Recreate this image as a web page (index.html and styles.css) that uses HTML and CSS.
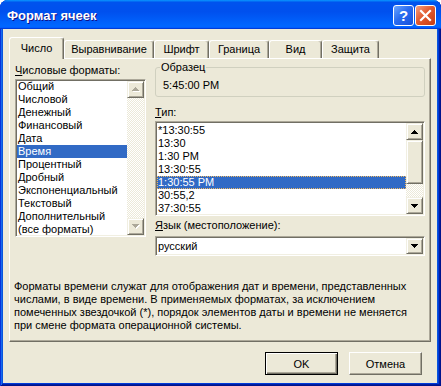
FILE: index.html
```html
<!DOCTYPE html>
<html lang="ru">
<head>
  <meta charset="UTF-8">
  <meta name="viewport" content="width=device-width, initial-scale=1.0">
  <title>Формат ячеек</title>
  <link rel="stylesheet" href="styles.css">
</head>
<body>
  <div class="window">
    <div class="titlebar">
      <span class="title">Формат ячеек</span>
      <div class="caption-buttons">
        <button class="cap-btn help">?</button>
        <button class="cap-btn close">
          <svg width="19" height="19" viewBox="0 0 19 19">
            <path d="M5 5L14 14M14 5L5 14" stroke="#fff" stroke-width="2.2" stroke-linecap="square"/>
          </svg>
        </button>
      </div>
    </div>

    <div class="client">
      <div class="tabs">
        <div class="tab tab-number active">Число</div>
        <div class="tab tab-align">Выравнивание</div>
        <div class="tab tab-font">Шрифт</div>
        <div class="tab tab-border">Граница</div>
        <div class="tab tab-view">Вид</div>
        <div class="tab tab-protect">Защита</div>
      </div>

      <div class="panel">
        <div class="columns">
          <div class="col-left">
            <label class="label"><u>Ч</u>исловые форматы:</label>
            <div class="listbox formats">
              <ul class="items">
                <li>Общий</li>
                <li>Числовой</li>
                <li>Денежный</li>
                <li>Финансовый</li>
                <li>Дата</li>
                <li class="selected">Время</li>
                <li>Процентный</li>
                <li>Дробный</li>
                <li>Экспоненциальный</li>
                <li>Текстовый</li>
                <li>Дополнительный</li>
                <li>(все форматы)</li>
              </ul>
              <div class="scrollbar disabled">
                <div class="sb-btn raised">
                  <svg width="8" height="5" viewBox="0 0 8 5"><path class="shade" d="M4 1h1v1h1v1h1v1h1v1H1V4h1V3h1V2h1z"/><path class="arrow" d="M3 0h1v1h1v1h1v1h1v1H0V3h1V2h1V1h1z"/></svg>
                </div>
                <div class="sb-track"></div>
                <div class="sb-btn raised">
                  <svg width="8" height="5" viewBox="0 0 8 5"><path class="shade" d="M1 1h7v1H7v1H6v1H5v1H4V4H3V3H2V2H1z"/><path class="arrow" d="M0 0h7v1H6v1H5v1H4v1H3V3H2V2H1V1H0z"/></svg>
                </div>
              </div>
            </div>
          </div>

          <div class="col-right">
            <fieldset class="group">
              <legend>Образец</legend>
              <div class="sample">5:45:00 PM</div>
            </fieldset>

            <label class="label type-label"><u>Т</u>ип:</label>
            <div class="listbox types">
              <ul class="items">
                <li>*13:30:55</li>
                <li>13:30</li>
                <li>1:30 PM</li>
                <li>13:30:55</li>
                <li class="selected focused">1:30:55 PM</li>
                <li>30:55,2</li>
                <li>37:30:55</li>
              </ul>
              <div class="scrollbar">
                <div class="sb-btn raised">
                  <svg width="7" height="4" viewBox="0 0 7 4"><path class="arrow" d="M3 0h1v1h1v1h1v1h1v1H0V3h1V2h1V1h1z"/></svg>
                </div>
                <div class="sb-thumb raised"></div>
                <div class="sb-track"></div>
                <div class="sb-btn raised">
                  <svg width="7" height="4" viewBox="0 0 7 4"><path class="arrow" d="M0 0h7v1H6v1H5v1H4v1H3V3H2V2H1V1H0z"/></svg>
                </div>
              </div>
            </div>

            <label class="label lang-label"><u>Я</u>зык (местоположение):</label>
            <div class="combo">
              <span class="combo-value">русский</span>
              <div class="sb-btn raised combo-btn">
                <svg width="7" height="4" viewBox="0 0 7 4"><path class="arrow" d="M0 0h7v1H6v1H5v1H4v1H3V3H2V2H1V1H0z"/></svg>
              </div>
            </div>
          </div>
        </div>

        <p class="desc">Форматы времени служат для отображения дат и времени, представленных<br>числами, в виде времени. В применяемых форматах, за исключением<br>помеченных звездочкой (*), порядок элементов даты и времени не меняется<br>при смене формата операционной системы.</p>
      </div>

      <div class="buttons">
        <button class="btn default">OK</button>
        <button class="btn">Отмена</button>
      </div>
    </div>
  </div>
</body>
</html>
```

FILE: styles.css
```css
/* Window frame */
* {
  box-sizing: border-box;
}

body {
  margin: 0;
  background: #fff;
  font-family: "Liberation Sans", Arial, sans-serif;
  font-size: 11px;
  color: #000;
}

.window {
  width: 441px;
  height: 386px;
  display: flex;
  flex-direction: column;
  border-radius: 8px 8px 0 0;
  overflow: hidden;
  background: #0855dd;
  box-shadow: inset 1px 0 #0831d9, inset -1px -1px #00138c,
    inset 2px 0 #166aee, inset -2px -2px #001ea0,
    inset -3px -3px #003bda;
}

.titlebar {
  flex: none;
  height: 29px;
  display: flex;
  align-items: center;
  justify-content: space-between;
  padding: 2px 5px 0 7px;
  background: linear-gradient(180deg, #0997ff, #0053ee 8%, #0050ee 40%, #06f 88%, #06f 93%, #005bff 95%, #003dd7 96%, #003dd7);
}

.title {
  color: #fff;
  font-weight: bold;
  font-size: 13px;
  text-shadow: 1px 1px #0f1089;
}

.caption-buttons {
  display: flex;
  gap: 1px;
}

.cap-btn {
  width: 21px;
  height: 21px;
  padding: 0;
  border: 1px solid #fff;
  border-radius: 3px;
  display: flex;
  align-items: center;
  justify-content: center;
}

.help {
  background: linear-gradient(135deg, #6aa6ff, #2a6cf0 45%, #1450dc);
  color: #fff;
  font: bold 15px "Liberation Sans", Arial, sans-serif;
}

.close {
  background: linear-gradient(135deg, #f4a080, #e25a30 45%, #c63c12);
}

.client {
  flex: 1;
  margin: 0 4px 3px 3px;
  background: #ece9d8;
  padding: 8px 6px 0 6px;
}

/* Tabs */
.tabs {
  display: flex;
  align-items: flex-end;
  height: 21px;
}

.tab {
  height: 18px;
  line-height: 17px;
  text-align: center;
  background: #ece9d8;
  border: 1px solid;
  border-bottom: none;
  border-color: #fff #716f64 #fff #fff;
  border-radius: 3px 3px 0 0;
  box-shadow: inset -1px 0 #aca899;
  white-space: nowrap;
}

.tab.active {
  height: 22px;
  margin-bottom: -1px;
  padding-top: 4px;
  line-height: 13px;
  position: relative;
  z-index: 1;
}

.tab-number { width: 55px; }
.tab-align { width: 90px; }
.tab-font { width: 55px; }
.tab-border { width: 60px; }
.tab-view { width: 53px; }
.tab-protect { width: 57px; }

.panel {
  height: 284px;
  border: 1px solid;
  border-color: #fff #716f64 #716f64 #fff;
  box-shadow: inset -1px -1px #aca899;
}

.columns {
  display: flex;
  gap: 9px;
  padding-left: 5px;
}

.col-left {
  width: 131px;
  padding-top: 5px;
}

.col-right {
  width: 270px;
  padding-top: 2px;
}

.label {
  display: block;
  line-height: 13px;
  white-space: nowrap;
}

/* Lists */
.listbox {
  display: flex;
  background: #fff;
  border: 1px solid;
  border-color: #aca899 #fff #fff #aca899;
  padding: 1px;
  box-shadow: inset 1px 1px #716f64, inset -1px -1px #f1efe2;
}

.formats {
  margin-top: 2px;
  height: 158px;
}

.formats .items {
  margin-top: -1px;
}

.types {
  margin-top: 2px;
  height: 95px;
}

.items {
  flex: 1;
  list-style: none;
  margin: 0;
  padding: 0;
  overflow: hidden;
}

.types .items {
  padding-top: 1px;
}

.items li {
  height: 13px;
  line-height: 13px;
  padding-left: 1px;
  white-space: nowrap;
}

.items li.selected {
  background: #316ac5;
  color: #fff;
}

.items li.focused {
  outline: 1px dotted #f0b860;
  outline-offset: -1px;
}

.scrollbar {
  width: 17px;
  flex: none;
  display: flex;
  flex-direction: column;
}

.raised {
  background: #ece9d8;
  border: 1px solid;
  border-color: #f1efe2 #716f64 #716f64 #f1efe2;
  box-shadow: inset 1px 1px #fff, inset -1px -1px #aca899;
}

.sb-btn {
  height: 17px;
  flex: none;
  display: flex;
  align-items: center;
  justify-content: center;
}

.sb-btn svg {
  display: block;
}

.arrow {
  fill: #000;
}

.disabled .arrow {
  fill: #aca899;
}

.shade {
  fill: #fff;
}

.sb-thumb {
  height: 44px;
  flex: none;
}

.sb-track {
  flex: 1;
  background: repeating-conic-gradient(#fff 0 25%, #ece9d8 0 50%) 0 0 / 2px 2px;
}

/* Sample group */
.group {
  margin: 0;
  padding: 5px 7px 4px;
  border: 1px solid #d0d0bf;
  border-radius: 3px;
}

.group legend {
  margin-left: -3px;
  padding: 0 1px;
  line-height: 13px;
}

.sample {
  line-height: 13px;
}

.type-label {
  margin-top: 9px;
}

.lang-label {
  margin-top: 3px;
}

.combo {
  margin-top: 4px;
  height: 20px;
  display: flex;
  background: #fff;
  border: 1px solid;
  border-color: #aca899 #fff #fff #aca899;
  padding: 1px;
  box-shadow: inset 1px 1px #716f64, inset -1px -1px #f1efe2;
}

.combo-value {
  flex: 1;
  line-height: 16px;
  padding-left: 1px;
}

.combo-btn {
  width: 17px;
  height: 16px;
}

.desc {
  margin: 24px 0 0;
  padding-left: 4px;
  line-height: 13px;
  white-space: nowrap;
}

/* Dialog buttons */
.buttons {
  display: flex;
  justify-content: flex-end;
  gap: 11px;
  margin-top: 10px;
  padding-right: 9px;
}

.btn {
  width: 73px;
  height: 23px;
  padding: 0;
  font: inherit;
  color: #000;
  background: #ece9d8;
  border: 1px solid;
  border-color: #fff #716f64 #716f64 #fff;
  box-shadow: inset -1px -1px #aca899;
}

.btn.default {
  border-color: #000;
  box-shadow: inset 1px 1px #fff, inset -1px -1px #716f64, inset -2px -2px #aca899;
}
```
